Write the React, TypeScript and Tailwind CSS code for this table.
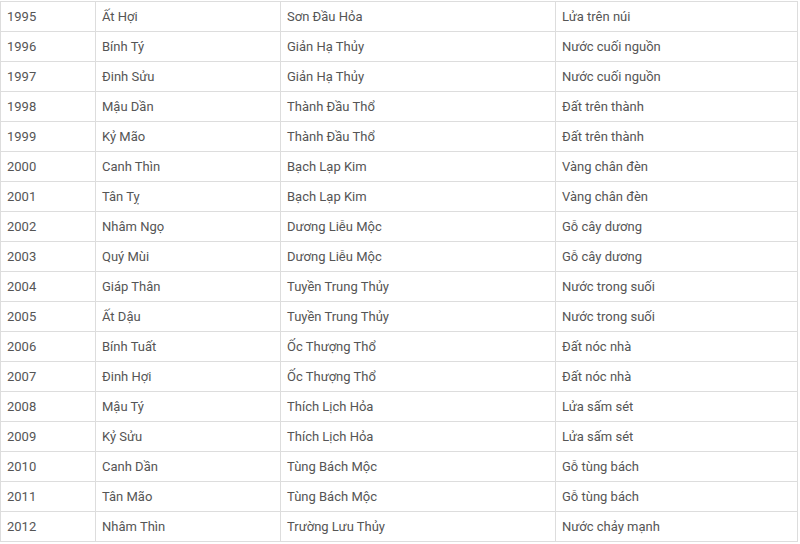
import React from "react";

const rows: [string, string, string, string][] = [
  ["1995", "Ất Hợi", "Sơn Đầu Hỏa", "Lửa trên núi"],
  ["1996", "Bính Tý", "Giản Hạ Thủy", "Nước cuối nguồn"],
  ["1997", "Đinh Sửu", "Giản Hạ Thủy", "Nước cuối nguồn"],
  ["1998", "Mậu Dần", "Thành Đầu Thổ", "Đất trên thành"],
  ["1999", "Kỷ Mão", "Thành Đầu Thổ", "Đất trên thành"],
  ["2000", "Canh Thìn", "Bạch Lạp Kim", "Vàng chân đèn"],
  ["2001", "Tân Tỵ", "Bạch Lạp Kim", "Vàng chân đèn"],
  ["2002", "Nhâm Ngọ", "Dương Liễu Mộc", "Gỗ cây dương"],
  ["2003", "Quý Mùi", "Dương Liễu Mộc", "Gỗ cây dương"],
  ["2004", "Giáp Thân", "Tuyền Trung Thủy", "Nước trong suối"],
  ["2005", "Ất Dậu", "Tuyền Trung Thủy", "Nước trong suối"],
  ["2006", "Bính Tuất", "Ốc Thượng Thổ", "Đất nóc nhà"],
  ["2007", "Đinh Hợi", "Ốc Thượng Thổ", "Đất nóc nhà"],
  ["2008", "Mậu Tý", "Thích Lịch Hỏa", "Lửa sấm sét"],
  ["2009", "Kỷ Sửu", "Thích Lịch Hỏa", "Lửa sấm sét"],
  ["2010", "Canh Dần", "Tùng Bách Mộc", "Gỗ tùng bách"],
  ["2011", "Tân Mão", "Tùng Bách Mộc", "Gỗ tùng bách"],
  ["2012", "Nhâm Thìn", "Trường Lưu Thủy", "Nước chảy mạnh"],
];

export default function App() {
  return (
    <div className="w-[800px] h-[544px] bg-white overflow-hidden pt-[1px] text-[13px] text-[#555]" style={{ fontFamily: "Roboto, 'Noto Sans', sans-serif" }}>
      <div className="w-[798px] border-b border-[#ddd]">
        {rows.map((r, i) => (
          <div key={i} className="flex h-[30px] border-t border-[#ddd]">
            <div className="w-[95px] border-l border-[#ddd] pl-[6px] flex items-center">{r[0]}</div>
            <div className="w-[185px] border-l border-[#ddd] pl-[6px] flex items-center">{r[1]}</div>
            <div className="w-[275px] border-l border-[#ddd] pl-[6px] flex items-center">{r[2]}</div>
            <div className="w-[243px] border-l border-r border-[#ddd] pl-[6px] flex items-center">{r[3]}</div>
          </div>
        ))}
      </div>
    </div>
  );
}
